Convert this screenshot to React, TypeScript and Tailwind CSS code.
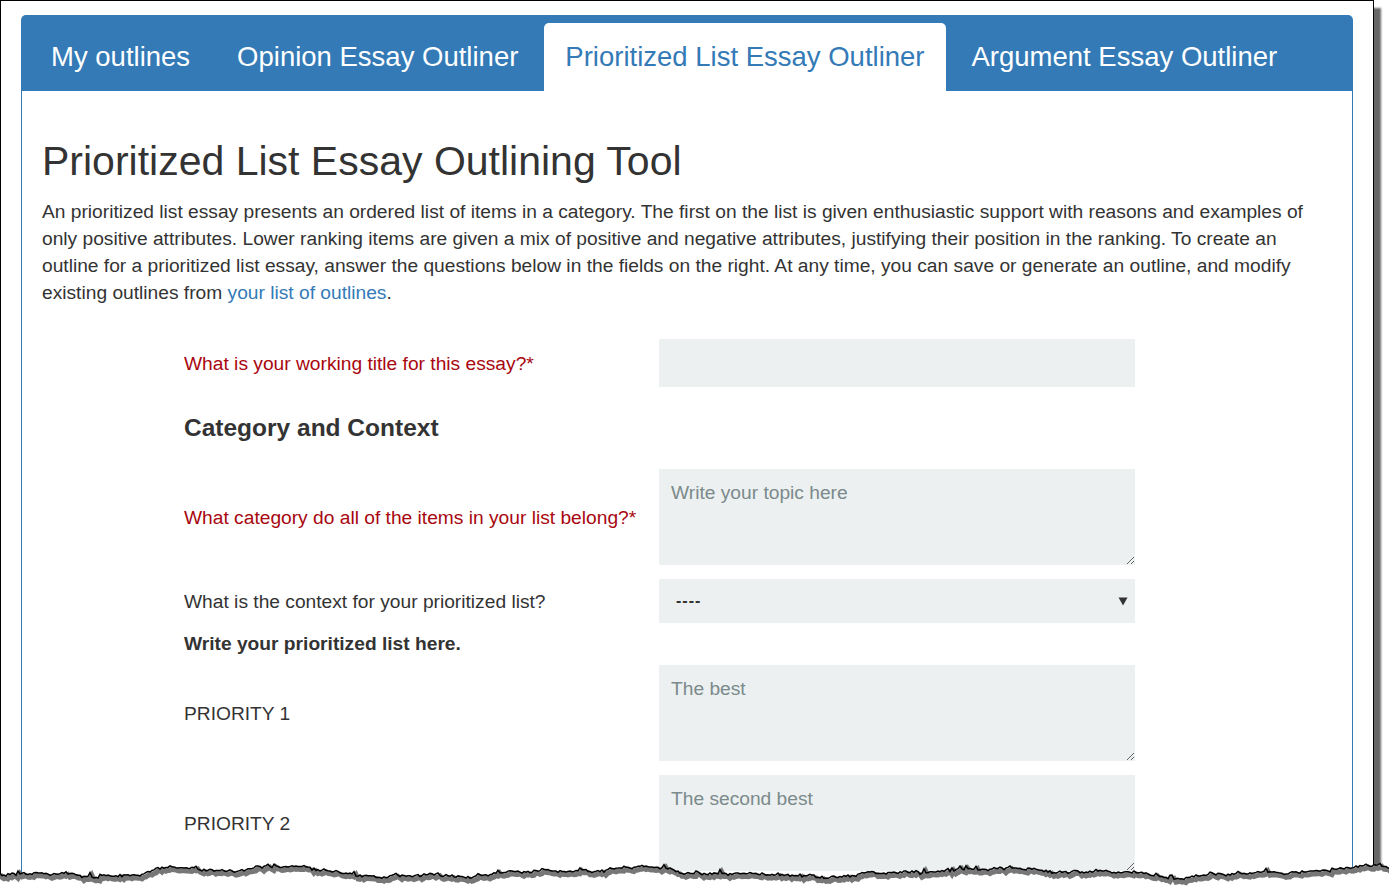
import React from "react";

function tornPoints(): [number, number][] {
  let seed = 12345;
  const rnd = () => {
    seed = (seed * 16807) % 2147483647;
    return seed / 2147483647;
  };
  const pts: [number, number][] = [];
  let drift = 0;
  for (let x = -2; x <= 1392; x += 2) {
    drift += (rnd() - 0.5) * 2.2;
    drift *= 0.88;
    const spike = rnd() > 0.93 ? -(rnd() * 4) : 0;
    const y =
      872 +
      3.4 * Math.sin(x / 61 + 0.7) +
      2 * Math.sin(x / 19 + 2.1) +
      drift +
      spike +
      (rnd() - 0.5) * 1.8;
    pts.push([x, Math.max(861, Math.min(881, y))]);
  }
  return pts;
}

function TornEdge() {
  const pts = tornPoints();
  const line = pts.map((p, i) => `${i === 0 ? "M" : "L"}${p[0].toFixed(1)},${p[1].toFixed(1)}`).join(" ");
  const fill = `${line} L1392,895 L-2,895 Z`;
  const shadow = pts
    .map((p, i) => `${i === 0 ? "M" : "L"}${(p[0] + 2).toFixed(1)},${(p[1] + 3).toFixed(1)}`)
    .join(" ");
  return (
    <svg
      className="absolute left-0 top-0 pointer-events-none"
      width={1389}
      height={891}
      viewBox="0 0 1389 891"
    >
      <path d={fill} fill="#ffffff" />
      <path d={shadow} fill="none" stroke="#555555" strokeWidth={5} opacity={0.8} />
      <path d={line} fill="none" stroke="#000000" strokeWidth={1.5} />
    </svg>
  );
}

const labelBase = "text-[19.2px] leading-[27px]";

function Row({
  label,
  red,
  children,
  className,
}: {
  label: string;
  red?: boolean;
  children: React.ReactNode;
  className?: string;
}) {
  return (
    <div className={`flex items-center ${className ?? ""}`}>
      <div className={`w-[475px] ${labelBase} ${red ? "text-[#a8070f]" : "text-[#333333]"}`}>{label}</div>
      <div className="w-[476px]">{children}</div>
    </div>
  );
}

function Area({ placeholder }: { placeholder: string }) {
  return (
    <textarea
      placeholder={placeholder}
      className="block w-full h-[96px] bg-[#ecf0f1] px-[12px] pt-[10px] text-[19.2px] leading-[27px] text-[#333333] placeholder:text-[#7b8a8b] outline-none resize-y"
    />
  );
}

export default function App() {
  return (
    <div
      className="relative w-[1389px] h-[891px] bg-white overflow-hidden"
      style={{ fontFamily: '"Liberation Sans", Arial, Helvetica, sans-serif' }}
    >
      <div className="w-[1374px] h-[891px] border-l border-t border-r border-black bg-white shadow-[7px_8px_2px_rgba(0,0,0,0.6)]">
        <div className="ml-[20px] mt-[14px] w-[1332px]">
          {/* Tab bar */}
          <div className="h-[76px] bg-[#337ab7] rounded-t-[5px] flex items-end pl-[9px] gap-[5px]">
            <div className="h-[68px] px-[21px] flex items-center text-[27.5px] text-white">My outlines</div>
            <div className="h-[68px] px-[21px] flex items-center text-[27.5px] text-white">Opinion Essay Outliner</div>
            <div className="h-[68px] px-[21px] flex items-center text-[27.5px] text-[#337ab7] bg-white rounded-t-[5px]">
              Prioritized List Essay Outliner
            </div>
            <div className="h-[68px] px-[21px] flex items-center text-[27.5px] text-white">Argument Essay Outliner</div>
          </div>

          {/* Body */}
          <div className="border-l border-r border-[#337ab7] pl-[20px] pr-[15px] pt-[48px] h-[820px] text-[#333333]">
            <h1 className="text-[41px] leading-[45px] font-normal text-[#333333]">
              Prioritized List Essay Outlining Tool
            </h1>
            <p className="mt-[14px] text-[19.2px] leading-[27px] text-[#333333]">
              <span className="block whitespace-nowrap">
                An prioritized list essay presents an ordered list of items in a category. The first on the list is given enthusiastic support with reasons and examples of
              </span>
              <span className="block whitespace-nowrap">
                only positive attributes. Lower ranking items are given a mix of positive and negative attributes, justifying their position in the ranking. To create an
              </span>
              <span className="block whitespace-nowrap">
                outline for a prioritized list essay, answer the questions below in the fields on the right. At any time, you can save or generate an outline, and modify
              </span>
              <span className="block whitespace-nowrap">
                existing outlines from <a className="text-[#337ab7]">your list of outlines</a>.
              </span>
            </p>

            <div className="ml-[142px] mt-[33px]">
              <Row label="What is your working title for this essay?*" red>
                <input className="block w-full h-[48px] bg-[#ecf0f1] px-[12px] text-[19.2px] outline-none" />
              </Row>

              <h3 className="mt-[26px] h-[30px] leading-[30px] text-[24.5px] font-bold text-[#333333]">
                Category and Context
              </h3>

              <Row label="What category do all of the items in your list belong?*" red className="mt-[26px]">
                <Area placeholder="Write your topic here" />
              </Row>

              <Row label="What is the context for your prioritized list?" className="mt-[14px]">
                <div className="relative h-[44px] bg-[#ecf0f1] flex items-center pl-[17px] text-[19.2px] text-[#333333]">
                  <span className="font-bold tracking-[1px] text-[16px]">----</span>
                  <svg className="absolute right-[7px] top-[17px]" width="10" height="10" viewBox="0 0 10 10">
                    <path d="M0.5 1.5 L9.5 1.5 L5 9.5 Z" fill="#333333" />
                  </svg>
                </div>
              </Row>

              <div className="mt-[7px] h-[28px] leading-[28px] text-[19.2px] font-bold text-[#333333]">
                Write your prioritized list here.
              </div>

              <Row label="PRIORITY 1" className="mt-[7px]">
                <Area placeholder="The best" />
              </Row>

              <Row label="PRIORITY 2" className="mt-[14px]">
                <Area placeholder="The second best" />
              </Row>
            </div>
          </div>
        </div>
      </div>
      <TornEdge />
    </div>
  );
}
